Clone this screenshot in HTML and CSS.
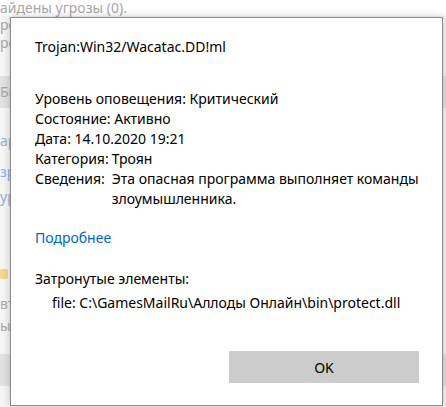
FILE: index.html
```html
<!DOCTYPE html>
<html lang="ru">
<head>
<meta charset="utf-8">
<title>Trojan:Win32/Wacatac.DD!ml</title>
<link rel="stylesheet" href="styles.css">
</head>
<body>
<div class="page">
  <div class="bg">
    <div class="bg-title">айдены угрозы (0).</div>
    <div class="bg-line">ро</div>
    <div class="bg-line">ро</div>
    <div class="bg-band b1"><span class="frag">Бь</span></div>
    <div class="bg-link l3">ар</div>
    <div class="bg-link l4">зр</div>
    <div class="bg-link l5">ур</div>
    <div class="bg-icon"></div>
    <div class="bg-line l6">вт</div>
    <div class="bg-line l7">ыт</div>
    <div class="bg-band b2"></div>
  </div>

  <div class="dialog">
    <div class="threat">Trojan:Win32/Wacatac.DD!ml</div>
    <div class="props">
      <div class="row">Уровень оповещения: Критический</div>
      <div class="row">Состояние: Активно</div>
      <div class="row">Дата: 14.10.2020 19:21</div>
      <div class="pair">
        <div class="label">Категория:</div>
        <div class="value">Троян</div>
        <div class="label">Сведения:</div>
        <div class="value">Эта опасная программа выполняет команды злоумышленника.</div>
      </div>
    </div>
    <a class="more" href="#">Подробнее</a>
    <div class="affected">Затронутые элементы:</div>
    <div class="file">file: C:\GamesMailRu\Аллоды Онлайн\bin\protect.dll</div>
    <div class="actions">
      <button class="ok">OK</button>
    </div>
  </div>
</div>
</body>
</html>
```

FILE: styles.css
```css
html, body {
  margin: 0;
  padding: 0;
  background: #ffffff;
}
.page {
  position: relative;
  width: 446px;
  height: 407px;
  overflow: hidden;
  font-family: "Noto Sans", "Open Sans", sans-serif;
}
.bg {
  display: flex;
  flex-direction: column;
  align-items: flex-start;
  font-size: 14px;
  color: #a8a8a8;
  background: #f6f6f6;
  height: 407px;
}
.bg-title {
  align-self: stretch;
  background: #ffffff;
  line-height: 16px;
  height: 16px;
  white-space: nowrap;
}
.bg-line, .bg-link {
  width: 10px;
  overflow: hidden;
  line-height: 18px;
  height: 18px;
  white-space: nowrap;
}
.b1 {
  align-self: stretch;
  margin-top: 24px;
  height: 32px;
  background: #e2e2e2;
  line-height: 32px;
}
.frag {
  display: block;
  width: 10px;
  overflow: hidden;
  white-space: nowrap;
}
.bg-link { color: #8db4dc; }
.l3 { margin-top: 24px; }
.l4 { margin-top: 13px; }
.l5 { margin-top: 7px; }
.bg-icon {
  margin-top: 63px;
  width: 8px;
  height: 10px;
  background: #f2d98a;
  border-radius: 2px;
}
.l6 { margin-top: 16px; }
.l7 { margin-top: 4px; }
.b2 {
  align-self: stretch;
  margin-top: 19px;
  height: 32px;
  background: #e2e2e2;
}

.dialog {
  position: absolute;
  left: 10px;
  top: 17px;
  width: 387px;
  height: 368px;
  padding: 19px 20px 0 24px;
  background: #ffffff;
  border: 1px solid #8c8c8c;
  box-shadow: 0 0 8px rgba(0, 0, 0, 0.22);
  color: #000000;
  font-size: 14px;
  line-height: 20px;
  display: flex;
  flex-direction: column;
}
.threat {
  white-space: nowrap;
}
.props {
  margin-top: 32px;
}
.pair {
  display: grid;
  grid-template-columns: auto 1fr;
  column-gap: 3px;
}
.label {
  white-space: nowrap;
}
.more {
  margin-top: 19px;
  color: #0067c0;
  text-decoration: none;
  align-self: flex-start;
}
.affected {
  margin-top: 21px;
}
.file {
  margin-top: 4px;
  padding-left: 17px;
  white-space: nowrap;
}
.actions {
  margin-top: 38px;
  padding-right: 3px;
  display: flex;
  justify-content: flex-end;
}
.ok {
  width: 190px;
  height: 32px;
  border: none;
  background: #cccccc;
  font-family: inherit;
  font-size: 14px;
  color: #000000;
  padding: 0;
}
```
